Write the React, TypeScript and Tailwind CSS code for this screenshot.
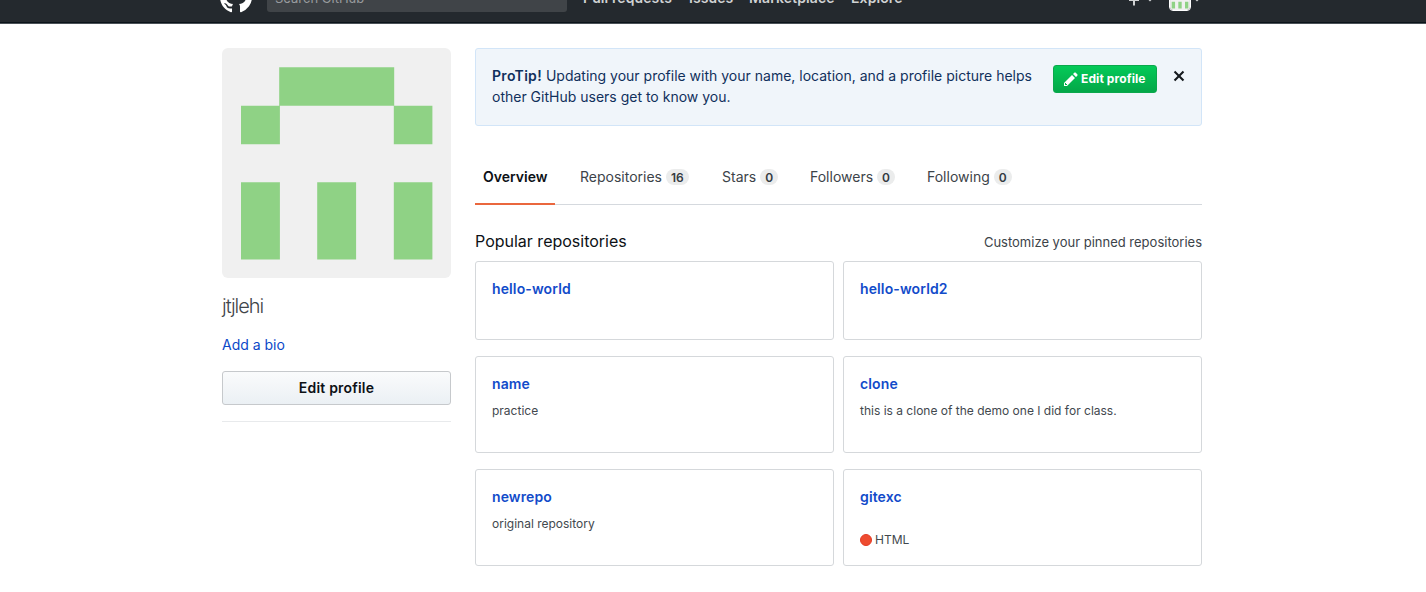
import React from "react";

type Repo = { name: string; description?: string; language?: string };

const repoRows: { height: string; repos: Repo[] }[] = [
  { height: "h-[79px]", repos: [{ name: "hello-world" }, { name: "hello-world2" }] },
  {
    height: "h-[97px]",
    repos: [
      { name: "name", description: "practice" },
      { name: "clone", description: "this is a clone of the demo one I did for class." },
    ],
  },
  {
    height: "h-[97px]",
    repos: [{ name: "newrepo", description: "original repository" }, { name: "gitexc", language: "HTML" }],
  },
];

const tabs = [
  { label: "Repositories", count: 16, width: "w-[142px]" },
  { label: "Stars", count: 0, width: "w-[88px]" },
  { label: "Followers", count: 0, width: "w-[117px]" },
  { label: "Following", count: 0, width: "w-[110px]" },
];

function Mark() {
  return (
    <svg className="h-8 w-8 shrink-0" viewBox="0 0 16 16" fill="#fff">
      <path d="M8 0C3.58 0 0 3.58 0 8c0 3.54 2.29 6.53 5.47 7.59.4.07.55-.17.55-.38 0-.19-.01-.82-.01-1.49-2.01.37-2.53-.49-2.69-.94-.09-.23-.48-.94-.82-1.13-.28-.15-.68-.52-.01-.53.63-.01 1.08.58 1.23.82.72 1.21 1.87.87 2.33.66.07-.52.28-.87.51-1.07-1.78-.2-3.64-.89-3.64-3.95 0-.87.31-1.59.82-2.15-.08-.2-.36-1.02.08-2.12 0 0 .67-.21 2.2.82.64-.18 1.32-.27 2-.27.68 0 1.36.09 2 .27 1.53-1.04 2.2-.82 2.2-.82.44 1.1.16 1.92.08 2.12.51.56.82 1.27.82 2.15 0 3.07-1.87 3.75-3.65 3.95.29.25.54.73.54 1.48 0 1.07-.01 1.93-.01 2.2 0 .21.15.46.55.38A8.013 8.013 0 0 0 16 8c0-4.42-3.58-8-8-8z" />
    </svg>
  );
}

function Identicon({ className }: { className: string }) {
  return (
    <svg className={className} viewBox="0 0 229 230">
      <rect width="229" height="230" fill="#f0f0f0" />
      <path
        fill="#8fd285"
        d="M57.2 19.2h115v38.6h-115zM19 57.8h38.9v38.5H19zM171.8 57.8h38.6v38.5h-38.6zM19 134.2h38.9v77.2H19zM95.2 134.2h38.9v77.2H95.2zM171.8 134.2h38.6v77.2h-38.6z"
      />
    </svg>
  );
}

function Header() {
  return (
    <header className="-mt-[30px] flex h-[54px] justify-center border-b border-[#4a5157] bg-[#24292e] shadow-[inset_0_-1px_0_#0b141a]">
      <div className="flex h-[53px] w-[986px] items-start pt-[11px]">
        <Mark />
        <div className="ml-[15px] mt-px flex h-[30px] w-[300px] items-center rounded-[3px] bg-[#404448] px-2 text-[13px] leading-5 text-[#989b9e]">
          <span className="pt-px">Search GitHub</span>
        </div>
        <nav className="ml-4 mt-[7px] flex gap-4 text-[14px] leading-[20px] font-semibold tracking-[0.1px] text-[#d0d2d3]">
          <span className="w-[90px] whitespace-nowrap">Pull requests</span>
          <span className="w-[44px] whitespace-nowrap">Issues</span>
          <span className="w-[86px] whitespace-nowrap">Marketplace</span>
          <span className="whitespace-nowrap">Explore</span>
        </nav>
        <div className="ml-auto mr-[5px] mt-[8px] flex items-center">
          <svg className="h-5 w-[26px]" viewBox="0 0 26 20" fill="#d0d2d3">
            <path d="M6 5h2v4h4v2H8v4.500H6V11H2V9h4zM19 7.500h8l-4 4z" />
          </svg>
          <Identicon className="ml-[16px] h-[22px] w-[22px] rounded-[4px] border-[1.5px] border-white" />
          <svg className="ml-[2px] h-5 w-2" viewBox="0 0 8 20" fill="#d0d2d3">
            <path d="M0 7.500h8l-4 4z" />
          </svg>
        </div>
      </div>
    </header>
  );
}

function Sidebar() {
  return (
    <aside className="w-[229px] shrink-0">
      <Identicon className="block h-[230px] w-[229px] rounded-[6px]" />
      <h1 className="mt-4 text-[20px] leading-6 font-light tracking-[-1px] text-[#3f454a]">jtjlehi</h1>
      <a className="mt-4 block text-[14px] leading-[21px] text-[#0b48c8]">Add a bio</a>
      <button className="mt-4 block h-[34px] w-full rounded-[3px] border border-[#c6c9cc] bg-linear-to-b from-[#fafbfc] to-[#ebf0f4] pb-[2px] text-[14px] font-semibold tracking-[0.2px] text-[#0d1116]">
        Edit profile
      </button>
      <div className="mt-4 border-t border-[#e8eaec]" />
    </aside>
  );
}

function ProTip() {
  return (
    <div className="flex h-[78px] items-start rounded-[3px] border border-[#d2e5f8] bg-[#f0f5fa] pl-4 pt-4">
      <p className="w-[561px] text-[14px] leading-[21px] text-[#10305c]">
        <strong className="font-semibold tracking-[0.3px]">ProTip!</strong> Updating your profile with your name, location, and a profile
        picture helps
        <br />
        other GitHub users get to know you.
      </p>
      <button className="flex h-7 w-[104px] items-center rounded-[3px] border border-[#0ba84c] bg-linear-to-b from-[#04ca58] to-[#04a748] pl-[10px] text-[12px] font-bold tracking-[0.1px] text-white">
        <svg className="mr-[3px] h-4 w-[14px]" viewBox="0 0 14 16" fill="currentColor">
          <path d="M0 12v3h3l8-8-3-3-8 8zm3 2H1v-2h1v1h1v1zm10.3-9.3L12 6 9 3l1.3-1.3a.996.996 0 0 1 1.410 0l1.590 1.590c.39.39.39 1.020 0 1.410z" />
        </svg>
        <span className="whitespace-nowrap">Edit profile</span>
      </button>
      <svg className="ml-4 mt-[3px] h-4 w-3" viewBox="0 0 12 16" fill="#15191d">
        <path d="M7.480 8l3.750 3.750-1.480 1.480L6 9.480l-3.750 3.750-1.480-1.480L4.520 8 .77 4.250l1.480-1.480L6 6.520l3.750-3.750 1.480 1.480z" />
      </svg>
    </div>
  );
}

function Tabs() {
  return (
    <div className="mt-[23px] flex h-14 border-b border-[#d5d9de] text-[14px] leading-[21px]">
      <div className="h-14 w-20 border-b-2 border-[#ea673e] pl-2 pt-[17px] font-semibold text-[#0d1116]">Overview</div>
      <div className="flex pl-[25px] pt-[17px]">
        {tabs.map((tab) => (
          <div key={tab.label} className={`${tab.width} flex shrink-0 items-start whitespace-nowrap text-[#3c4349]`}>
            {tab.label}
            <span className="ml-1 mt-[3px] flex h-4 items-center rounded-full bg-[#ebecec] px-[5px] text-[12px] font-semibold text-[#343b42]">
              {tab.count}
            </span>
          </div>
        ))}
      </div>
    </div>
  );
}

function RepoCard({ repo, height }: { repo: Repo; height: string }) {
  return (
    <div className={`${height} w-[359px] rounded-[3px] border border-[#d5d8db] pl-4 pt-4`}>
      <a className="block text-[14px] leading-[21px] font-semibold tracking-[0.12px] text-[#124bca]">{repo.name}</a>
      {repo.description && <p className="mt-2 text-[12px] leading-[18px] text-[#42484e]">{repo.description}</p>}
      {repo.language && (
        <p className="mt-6 flex items-center text-[12px] leading-[18px] text-[#42484e]">
          <span className="mr-[3px] mb-px h-3 w-3 rounded-full border border-[#e43b24] bg-[#ee4c30]" />
          {repo.language}
        </p>
      )}
    </div>
  );
}

export default function App() {
  return (
    <div className="h-[592px] overflow-hidden bg-white font-['Inter','Liberation_Sans',sans-serif]">
      <Header />
      <main className="mx-auto flex w-[982px] gap-6 pt-6">
        <Sidebar />
        <section className="w-[727px] shrink-0">
          <ProTip />
          <Tabs />
          <div className="mt-6 mb-[7px] flex items-center justify-between leading-6">
            <h2 className="pb-px text-[16px] text-[#0d1116]">Popular repositories</h2>
            <a className="text-[13px] text-[#3c4349]">Customize your pinned repositories</a>
          </div>
          <div className="flex flex-col gap-4">
            {repoRows.map((row) => (
              <div key={row.repos[0].name} className="flex justify-between">
                {row.repos.map((repo) => (
                  <RepoCard key={repo.name} repo={repo} height={row.height} />
                ))}
              </div>
            ))}
          </div>
        </section>
      </main>
    </div>
  );
}
